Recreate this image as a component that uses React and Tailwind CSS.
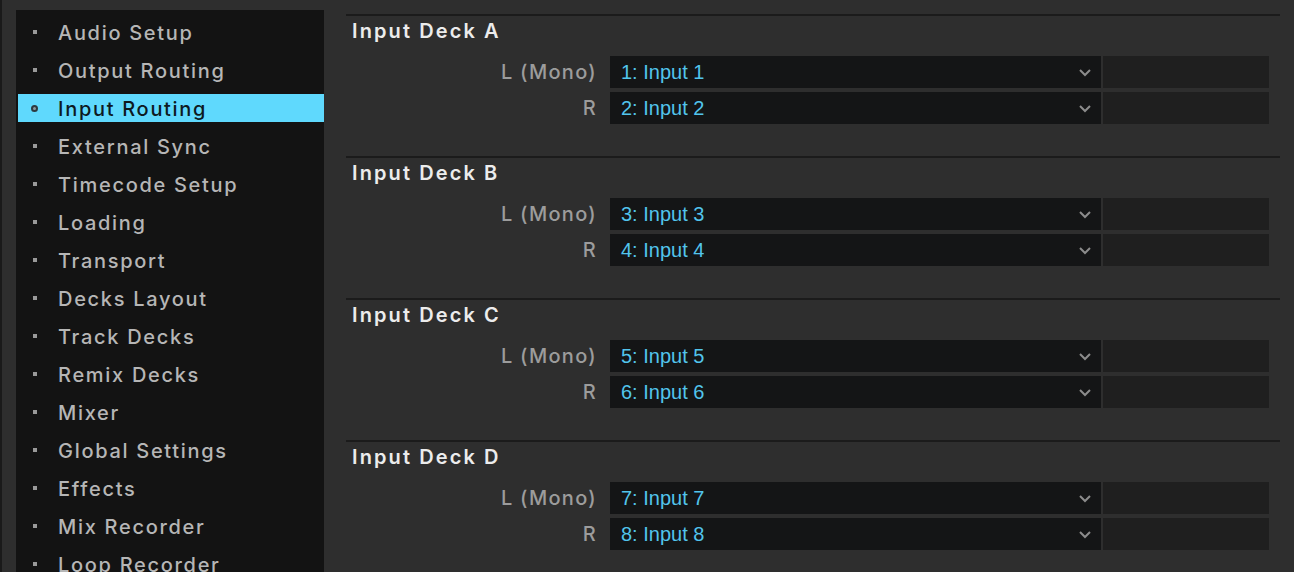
import React from "react";

const navItems = [
  "Audio Setup",
  "Output Routing",
  "Input Routing",
  "External Sync",
  "Timecode Setup",
  "Loading",
  "Transport",
  "Decks Layout",
  "Track Decks",
  "Remix Decks",
  "Mixer",
  "Global Settings",
  "Effects",
  "Mix Recorder",
  "Loop Recorder",
];

const decks = [
  { name: "A", l: "1: Input 1", r: "2: Input 2" },
  { name: "B", l: "3: Input 3", r: "4: Input 4" },
  { name: "C", l: "5: Input 5", r: "6: Input 6" },
  { name: "D", l: "7: Input 7", r: "8: Input 8" },
];

const font = { fontFamily: '"Liberation Sans", Arial, sans-serif' };
const inter = { fontFamily: 'Inter, "Liberation Sans", Arial, sans-serif' };

function Chevron() {
  return (
    <svg width="14" height="9" viewBox="0 0 14 9" className="shrink-0">
      <path d="M2 2 L7 7 L12 2" fill="none" stroke="#8c8c8c" strokeWidth="2" />
    </svg>
  );
}

function Row({ label, value }) {
  return (
    <div className="flex h-[32px] items-stretch">
      <div
        className="flex w-[264px] items-center justify-end pr-[13px] text-[20px] font-medium tracking-[1.3px] text-[#9c9c9c]"
        style={inter}
      >
        {label}
      </div>
      <div className="flex w-[491px] items-center justify-between bg-[#141516] pl-[11px] pr-[9px]">
        <span className="text-[20px] leading-none text-[#52c4ec]">{value}</span>
        <Chevron />
      </div>
      <div className="ml-[2px] w-[166px] bg-[#1f1f1f]" />
    </div>
  );
}

function Deck({ deck }) {
  return (
    <div className="flex flex-col">
      <div className="h-[2px] w-[934px] bg-[#1b1b1b]" />
      <div
        className="flex h-[30px] items-center pl-[6px] text-[20px] font-semibold tracking-[2.1px] text-[#ececec]"
        style={inter}
      >
        Input Deck {deck.name}
      </div>
      <div className="mt-[10px] flex flex-col gap-[4px]">
        <Row label="L (Mono)" value={deck.l} />
        <Row label="R" value={deck.r} />
      </div>
      <div className="h-[32px]" />
    </div>
  );
}

export default function App() {
  return (
    <div
      className="flex h-[572px] w-[1294px] overflow-hidden bg-[#2e2e2e]"
      style={font}
    >
      <div className="w-[2px] shrink-0 bg-[#1a1a1a]" />
      <div className="ml-[14px] mt-[10px] flex w-[308px] shrink-0 flex-col gap-[10px] bg-[#131313] pt-[8px]">
        {navItems.map((item) => {
          const sel = item === "Input Routing";
          return (
            <div
              key={item}
              className={`ml-[2px] flex h-[28px] shrink-0 items-center ${sel ? "bg-[#5fd9fd]" : ""}`}
            >
              <div className="flex w-[40px] items-center justify-center pl-[3px] pr-[10px]">
                {sel ? (
                  <div className="h-[7px] w-[7px] rounded-full border-[2px] border-[#2d3a40] bg-[#8a9aa0]" />
                ) : (
                  <div className="h-[4px] w-[4px] bg-[#9a9a9a]" />
                )}
              </div>
              <span
                className={`pt-[1px] text-[20px] font-medium tracking-[1.7px] ${sel ? "text-[#0d1a1f]" : "text-[#b6b6b6]"}`}
                style={inter}
              >
                {item}
              </span>
            </div>
          );
        })}
      </div>
      <div className="ml-[22px] mt-[14px] flex flex-col">
        {decks.map((d) => (
          <Deck key={d.name} deck={d} />
        ))}
      </div>
    </div>
  );
}
